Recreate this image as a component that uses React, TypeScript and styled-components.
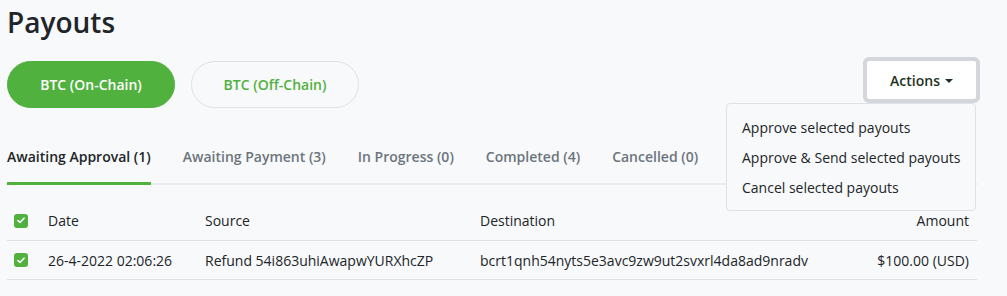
import React, { ReactElement, useState } from 'react';
import styled, { createGlobalStyle, css } from 'styled-components';

const GREEN = '#51b13e';

const GlobalStyle = createGlobalStyle`
  body {
    margin: 0;
    background: #f8f9fa;
    font-family: "Open Sans", "Noto Sans", sans-serif;
    color: #212529;
  }
`;

type TabData = { label: string; count: number };

const tabs: TabData[] = [
  { label: 'Awaiting Approval', count: 1 },
  { label: 'Awaiting Payment', count: 3 },
  { label: 'In Progress', count: 0 },
  { label: 'Completed', count: 4 },
  { label: 'Cancelled', count: 0 },
];

const actions = [
  'Approve selected payouts',
  'Approve & Send selected payouts',
  'Cancel selected payouts',
];

function Check(): ReactElement {
  return (
    <CheckBox>
      <svg width="8" height="7" viewBox="0 0 8 7">
        <path
          d="M1 3.6 L3 5.4 L7 1.2"
          fill="none"
          stroke="#fff"
          strokeWidth="1.6"
          strokeLinecap="round"
          strokeLinejoin="round"
        />
      </svg>
    </CheckBox>
  );
}

function App(): ReactElement {
  const [chain, setChain] = useState<'on' | 'off'>('on');
  const [active, setActive] = useState(0);

  return (
    <Page>
      <GlobalStyle />
      <Title>Payouts</Title>

      <Toolbar>
        <Pills>
          <Pill active={chain === 'on'} onClick={() => setChain('on')}>
            BTC (On-Chain)
          </Pill>
          <Pill active={chain === 'off'} onClick={() => setChain('off')}>
            BTC (Off-Chain)
          </Pill>
        </Pills>

        <ActionsWrap>
          <ActionsButton>
            Actions <Caret />
          </ActionsButton>
          <Menu>
            {actions.map((a) => (
              <MenuItem key={a}>{a}</MenuItem>
            ))}
          </Menu>
        </ActionsWrap>
      </Toolbar>

      <TabBar>
        {tabs.map((t, i) => (
          <Tab key={t.label} active={i === active} onClick={() => setActive(i)}>
            {t.label} ({t.count})
          </Tab>
        ))}
      </TabBar>

      <Table>
        <colgroup>
          <col style={{ width: 21 }} />
          <col style={{ width: 157 }} />
          <col style={{ width: 275 }} />
          <col style={{ width: 370 }} />
          <col />
        </colgroup>
        <thead>
          <tr>
            <CheckCell>
              <Check />
            </CheckCell>
            <Th>Date</Th>
            <Th>Source</Th>
            <Th>Destination</Th>
            <Th align="right">Amount</Th>
          </tr>
        </thead>
        <tbody>
          <tr>
            <CheckCell>
              <Check />
            </CheckCell>
            <Td>26-4-2022 02:06:26</Td>
            <Td>Refund 54i863uhiAwapwYURXhcZP</Td>
            <Td>bcrt1qnh54nyts5e3avc9zw9ut2svxrl4da8ad9nradv</Td>
            <Td align="right">$100.00 (USD)</Td>
          </tr>
        </tbody>
      </Table>
    </Page>
  );
}

const Page = styled.div`
  padding: 0 30px 0 7px;
`;

const Title = styled.h2`
  margin: 0;
  padding-top: 2px;
  font-size: 28px;
  font-weight: 600;
  line-height: 40px;
  color: #212529;
`;

const Toolbar = styled.div`
  display: flex;
  justify-content: space-between;
  align-items: flex-start;
  margin-top: 19px;
`;

const Pills = styled.div`
  display: flex;
  gap: 16px;
`;

type PillProps = { active?: boolean };
const Pill = styled.button<PillProps>`
  width: 168px;
  height: 47px;
  border-radius: 24px;
  font-family: inherit;
  font-size: 14px;
  font-weight: 600;
  cursor: pointer;
  ${(p) =>
    p.active
      ? css`
          background: ${GREEN};
          border: 1px solid ${GREEN};
          color: #fff;
        `
      : css`
          background: transparent;
          border: 1px solid #dee2e6;
          color: ${GREEN};
        `}
`;

const ActionsWrap = styled.div`
  position: relative;
  margin-top: -4px;
  margin-right: -3px;
`;

const ActionsButton = styled.button`
  display: flex;
  align-items: center;
  gap: 5px;
  justify-content: center;
  width: 117px;
  height: 46px;
  background: #fff;
  border: 4px solid #d3d6da;
  border-radius: 6px;
  font-family: inherit;
  font-size: 14px;
  font-weight: 600;
  color: #1d3320;
  cursor: pointer;
`;

const Caret = styled.span`
  width: 0;
  height: 0;
  border-left: 4px solid transparent;
  border-right: 4px solid transparent;
  border-top: 4px solid #1d3320;
  margin-top: 1px;
`;

const Menu = styled.ul`
  position: absolute;
  top: 46px;
  right: 4px;
  z-index: 2;
  width: 250px;
  box-sizing: border-box;
  margin: 0;
  padding: 9px 0 7px;
  list-style: none;
  background: #f8f9fa;
  border: 1px solid #dee2e6;
  border-radius: 4px;
`;

const MenuItem = styled.li`
  padding: 0 15px;
  line-height: 30px;
  font-size: 14px;
  color: #212529;
  white-space: nowrap;
  cursor: pointer;
`;

const TabBar = styled.nav`
  display: flex;
  margin-top: 30px;
  border-bottom: 2px solid #e9ecef;
`;

type TabProps = { active?: boolean };
const Tab = styled.a<TabProps>`
  padding: 9px 0 15px;
  margin-right: 32px;
  margin-bottom: -2px;
  font-size: 14px;
  font-weight: 600;
  line-height: 20px;
  cursor: pointer;
  color: ${(p) => (p.active ? '#212529' : '#6c757d')};
  border-bottom: 3px solid ${(p) => (p.active ? GREEN : 'transparent')};
`;

const Table = styled.table`
  width: 100%;
  table-layout: fixed;
  margin-top: 16px;
  border-collapse: collapse;
  font-size: 14px;
`;

const cellBase = css`
  padding: 0 0 0 20px;
  vertical-align: middle;
  white-space: nowrap;
  border-bottom: 1px solid #dee2e6;
`;

const Th = styled.th<{ align?: string }>`
  ${cellBase}
  height: 39px;
  font-weight: 400;
  text-align: ${(p) => p.align || 'left'};
  padding-right: ${(p) => (p.align === 'right' ? '8px' : '0')};
`;

const Td = styled.td<{ align?: string }>`
  ${cellBase}
  height: 38px;
  text-align: ${(p) => p.align || 'left'};
  padding-right: ${(p) => (p.align === 'right' ? '8px' : '0')};
`;

const CheckCell = styled.td`
  padding: 0 0 0 7px;
  border-bottom: 1px solid #dee2e6;
  vertical-align: middle;
`;

const CheckBox = styled.span`
  display: flex;
  align-items: center;
  justify-content: center;
  width: 14px;
  height: 14px;
  border-radius: 3px;
  background: ${GREEN};
`;

export default App;
